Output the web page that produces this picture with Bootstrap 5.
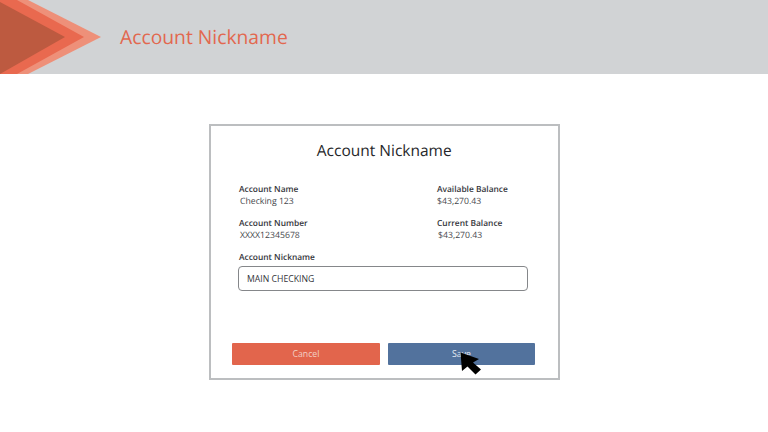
<!doctype html>
<html lang="en">
<head>
<meta charset="utf-8">
<title>Account Nickname</title>
<link href="https://cdn.jsdelivr.net/npm/bootstrap@5.3.0/dist/css/bootstrap.min.css" rel="stylesheet">
<style>
html,body{height:432px;overflow:hidden;background:#fff;font-family:"Open Sans",sans-serif;color:#2f3033;text-rendering:geometricPrecision}
.top-band{height:74px;background:#d1d3d5}
.top-band svg{width:102px;height:74px;flex:none}
.top-title{margin:0 0 0 18px;font-size:19.3px;font-weight:400;line-height:1;color:#e2684f;padding-bottom:1px}
.acct-panel{width:350.5px;height:256px;margin:50px 0 0 209px;border:2px solid #bcbec0;border-radius:0;background:#fff;position:relative;box-shadow:none}
.panel-title{font-size:15.5px;font-weight:400;line-height:22px;text-align:center;margin:13px 0 0;color:#26272a}
.field-grid{margin:24px 0 0 28px;display:grid;grid-template-columns:198px auto;row-gap:12px;font-size:8.4px;line-height:10.5px}
.f-label{font-weight:600;color:#34353a}
.f-value{color:#44464b;padding-left:1px;font-size:8.7px;line-height:11.5px}
.f-flush{padding-left:0}
.nick-label{margin:11px 0 0 28px;font-size:8.4px;line-height:11.5px;font-weight:600;color:#34353a}
.nick-input{display:block;width:290px;height:25px;min-height:0;margin:2.5px 0 0 27px;padding:0 8px;font-size:8.7px;font-family:inherit;color:#33353a;border:1px solid #85878a;border-radius:4px;box-shadow:none;background:#fff}
.btn-pair{margin:52px 0 0 21px;gap:8px}
.act-btn{width:148px;height:22px;padding:0;font-size:8.7px;line-height:22px;border:0;border-radius:1px}
.act-cancel,.act-cancel:hover{background:#e2654c;color:#f3cfc5}
.act-save,.act-save:hover{background:#52729d;color:#e6ecf4;width:147px}
.ptr{position:absolute;left:249px;top:226px;width:24px;height:24px}
</style>
</head>
<body>
<header class="top-band d-flex align-items-center">
<svg viewBox="0 0 102 74" aria-hidden="true"><polygon points="28,0 101,37 28,74 0,74 0,0" fill="#ee9079"/><polygon points="17,0 84,37 17,74 0,74 0,0" fill="#e9694f"/><polygon points="0,2 65,37 0,74" fill="#bd5a40"/></svg>
<h1 class="top-title">Account Nickname</h1>
</header>
<main class="acct-panel card">
<h2 class="panel-title">Account Nickname</h2>
<div class="field-grid">
<div><div class="f-label">Account Name</div><div class="f-value">Checking 123</div></div>
<div><div class="f-label">Available Balance</div><div class="f-value f-flush">$43,270.43</div></div>
<div><div class="f-label">Account Number</div><div class="f-value">XXXX12345678</div></div>
<div><div class="f-label">Current Balance</div><div class="f-value">$43,270.43</div></div>
</div>
<div class="nick-label">Account Nickname</div>
<input class="nick-input form-control" type="text" value="MAIN CHECKING" aria-label="Account Nickname">
<div class="btn-pair d-flex">
<button class="act-btn act-cancel btn" type="button">Cancel</button>
<button class="act-btn act-save btn" type="button">Save</button>
</div>
<svg class="ptr" viewBox="0 0 24 24" aria-hidden="true"><path d="M0.5 0.5 L2 19 L7.5 14.5 L15.5 22.5 L21 17.5 L13 10.5 L19 7 Z" fill="#000"/></svg>
</main>
<script src="https://cdn.jsdelivr.net/npm/bootstrap@5.3.0/dist/js/bootstrap.bundle.min.js"></script>
</body>
</html>
